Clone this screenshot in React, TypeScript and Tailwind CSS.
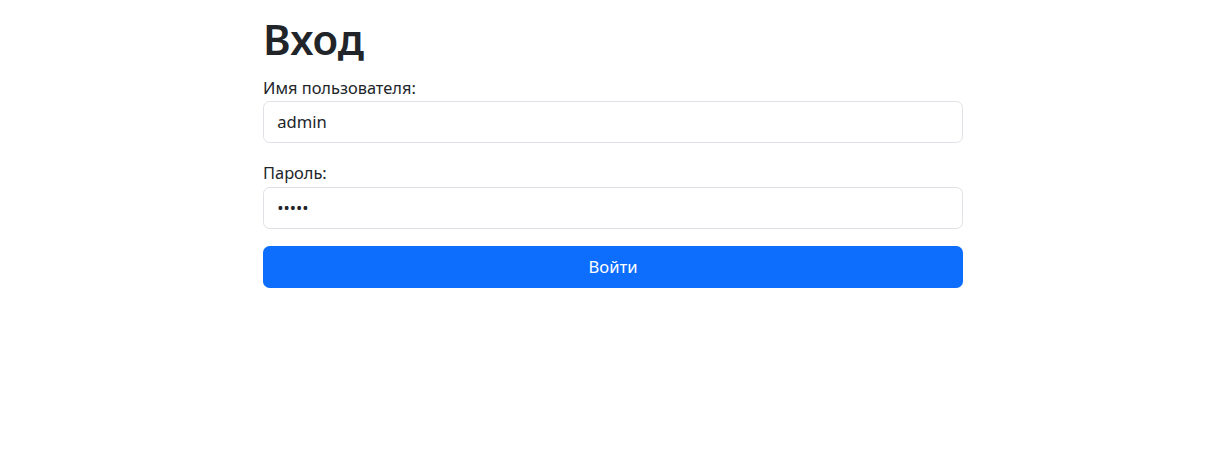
export default function App() {
  return (
    <div className="min-h-screen bg-white text-[#212529]" style={{ fontFamily: '"Noto Sans", "Open Sans", sans-serif' }}>
      <div className="ml-[263px] w-[700px] pt-[13px]">
        <h1 className="text-[42px] font-semibold leading-[52.8px] mb-[8.8px]">Вход</h1>

        <form onSubmit={(e) => e.preventDefault()}>
          <div className="mb-[17.6px]">
            <label className="block text-[16.4px] leading-[26.4px]">Имя пользователя:</label>
            <input
              type="text"
              defaultValue="admin"
              className="block w-full h-[41.8px] px-[13.2px] text-[16.6px] border border-[#dee2e6] rounded-[6.6px] outline-none text-[#212529]"
            />
          </div>

          <div className="mb-[17.6px]">
            <label className="block text-[16.4px] leading-[26.4px]">Пароль:</label>
            <input
              type="password"
              defaultValue="admin"
              className="block w-full h-[41.8px] px-[13.2px] text-[16.6px] border border-[#dee2e6] rounded-[6.6px] outline-none text-[#212529]"
            />
          </div>

          <button
            type="submit"
            className="block w-full h-[41.8px] bg-[#0d6efd] text-white text-[16.6px] rounded-[6.6px]"
          >
            Войти
          </button>
        </form>
      </div>
    </div>
  );
}
